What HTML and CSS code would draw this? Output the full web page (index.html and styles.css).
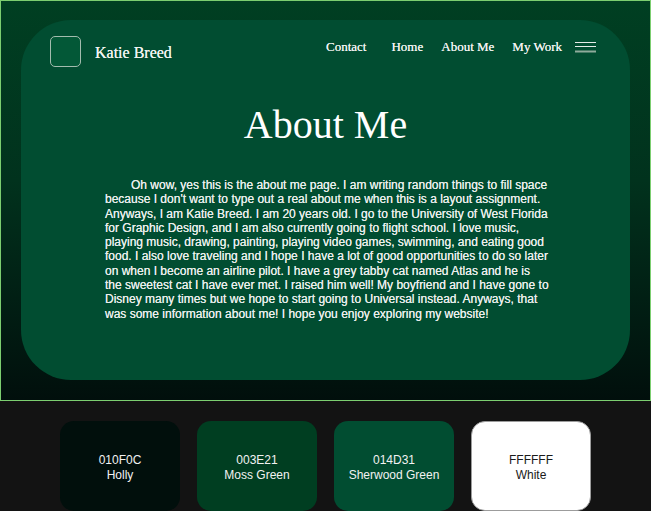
FILE: index.html
```html
<!DOCTYPE html>
<html lang="en">
<head>
<meta charset="utf-8">
<title>About Me</title>
<link rel="stylesheet" href="styles.css">
</head>
<body>
<header class="hero">
  <div class="card">
    <nav class="nav">
      <div class="brand">
        <span class="logo"></span>
        <span class="brand-name">Katie Breed</span>
      </div>
      <ul class="links">
        <li class="link link-contact">Contact</li>
        <li class="link">Home</li>
        <li class="link">About Me</li>
        <li class="link">My Work</li>
        <li class="menu">
          <svg width="21" height="12" viewBox="0 0 21 12">
            <rect x="0" y="0" width="21" height="1" fill="#e6ece8"/>
            <rect x="0" y="4" width="21" height="1" fill="#e6ece8"/>
            <rect x="0" y="8.5" width="21" height="2" fill="#8fab9b"/>
          </svg>
        </li>
      </ul>
    </nav>
    <h1 class="title">About Me</h1>
    <p class="about">Oh wow, yes this is the about me page. I am writing random things to fill space because I don't want to type out a real about me when this is a layout assignment. Anyways, I am Katie Breed. I am 20 years old. I go to the University of West Florida for Graphic Design, and I am also currently going to flight school. I love music, playing music, drawing, painting, playing video games, swimming, and eating good food. I also love traveling and I hope I have a lot of good opportunities to do so later on when I become an airline pilot. I have a grey tabby cat named Atlas and he is the sweetest cat I have ever met. I raised him well! My boyfriend and I have gone to Disney many times but we hope to start going to Universal instead. Anyways, that was some information about me! I hope you enjoy exploring my website!</p>
  </div>
</header>
<section class="palette">
  <div class="swatch holly"><span>010F0C</span><span>Holly</span></div>
  <div class="swatch moss"><span>003E21</span><span>Moss Green</span></div>
  <div class="swatch sherwood"><span>014D31</span><span>Sherwood Green</span></div>
  <div class="swatch white"><span>FFFFFF</span><span>White</span></div>
</section>
</body>
</html>
```
FILE: styles.css
```css
* { box-sizing: border-box; }
html, body { margin: 0; padding: 0; }
body {
  background: #131313;
  font-family: "Liberation Sans", Arial, sans-serif;
}
.hero {
  border: 1px solid #7cce70;
  background: linear-gradient(to bottom, #003f22 0%, #01321d 45%, #010f0c 100%);
  padding: 19px 20px 19px 20px;
  height: 401px;
}
.card {
  background: #014d31;
  border-radius: 50px;
  height: 360px;
  padding: 15px 0 0 0;
}
.nav {
  display: flex;
  justify-content: space-between;
  align-items: center;
  height: 32px;
  padding: 0 34px 0 29px;
}
.brand {
  display: flex;
  align-items: center;
  gap: 14px;
}
.logo {
  display: block;
  width: 31px;
  height: 31px;
  border: 1px solid #a3bcae;
  border-radius: 5px;
  background: #035837;
}
.brand-name {
  font-family: "Liberation Serif", "Times New Roman", serif;
  font-size: 16px;
  color: #f2f4f2;
  text-shadow: 0 0 0.6px #f2f4f2;
  margin-top: 3px;
}
.links {
  list-style: none;
  margin: 0;
  padding: 0;
  display: flex;
  align-items: center;
  gap: 18px;
  margin-top: -8px;
}
.link {
  font-family: "Liberation Serif", "Times New Roman", serif;
  font-size: 13px;
  color: #f0f2f0;
  text-shadow: 0 0 0.5px #f0f2f0;
}
.link-contact { margin-right: 7px; }
.menu { display: flex; margin-left: -5px; margin-top: 1px; }
.title {
  margin: 36px 0 0 0;
  text-align: center;
  font-family: "Liberation Serif", "Times New Roman", serif;
  font-weight: normal;
  font-size: 40px;
  line-height: 44px;
  color: #ffffff;
}
.about {
  width: 444px;
  margin: 31px 0 0 84px;
  font-size: 12px;
  line-height: 14.3px;
  color: #eaeeec;
  text-shadow: 0 0 0.3px #eaeeec;
  text-indent: 26px;
}
.palette {
  display: flex;
  justify-content: center;
  gap: 17px;
  padding-top: 20px;
}
.swatch {
  width: 120px;
  height: 90px;
  padding-top: 4px;
  border-radius: 14px;
  display: flex;
  flex-direction: column;
  align-items: center;
  justify-content: center;
  font-size: 12px;
  line-height: 15px;
  color: #f2f2f2;
}
.holly { background: #010f0c; }
.moss { background: #003e21; }
.sherwood { background: #014d31; }
.white { background: #ffffff; color: #1a1a1a; border: 1px solid #9c9c9c; }
```
